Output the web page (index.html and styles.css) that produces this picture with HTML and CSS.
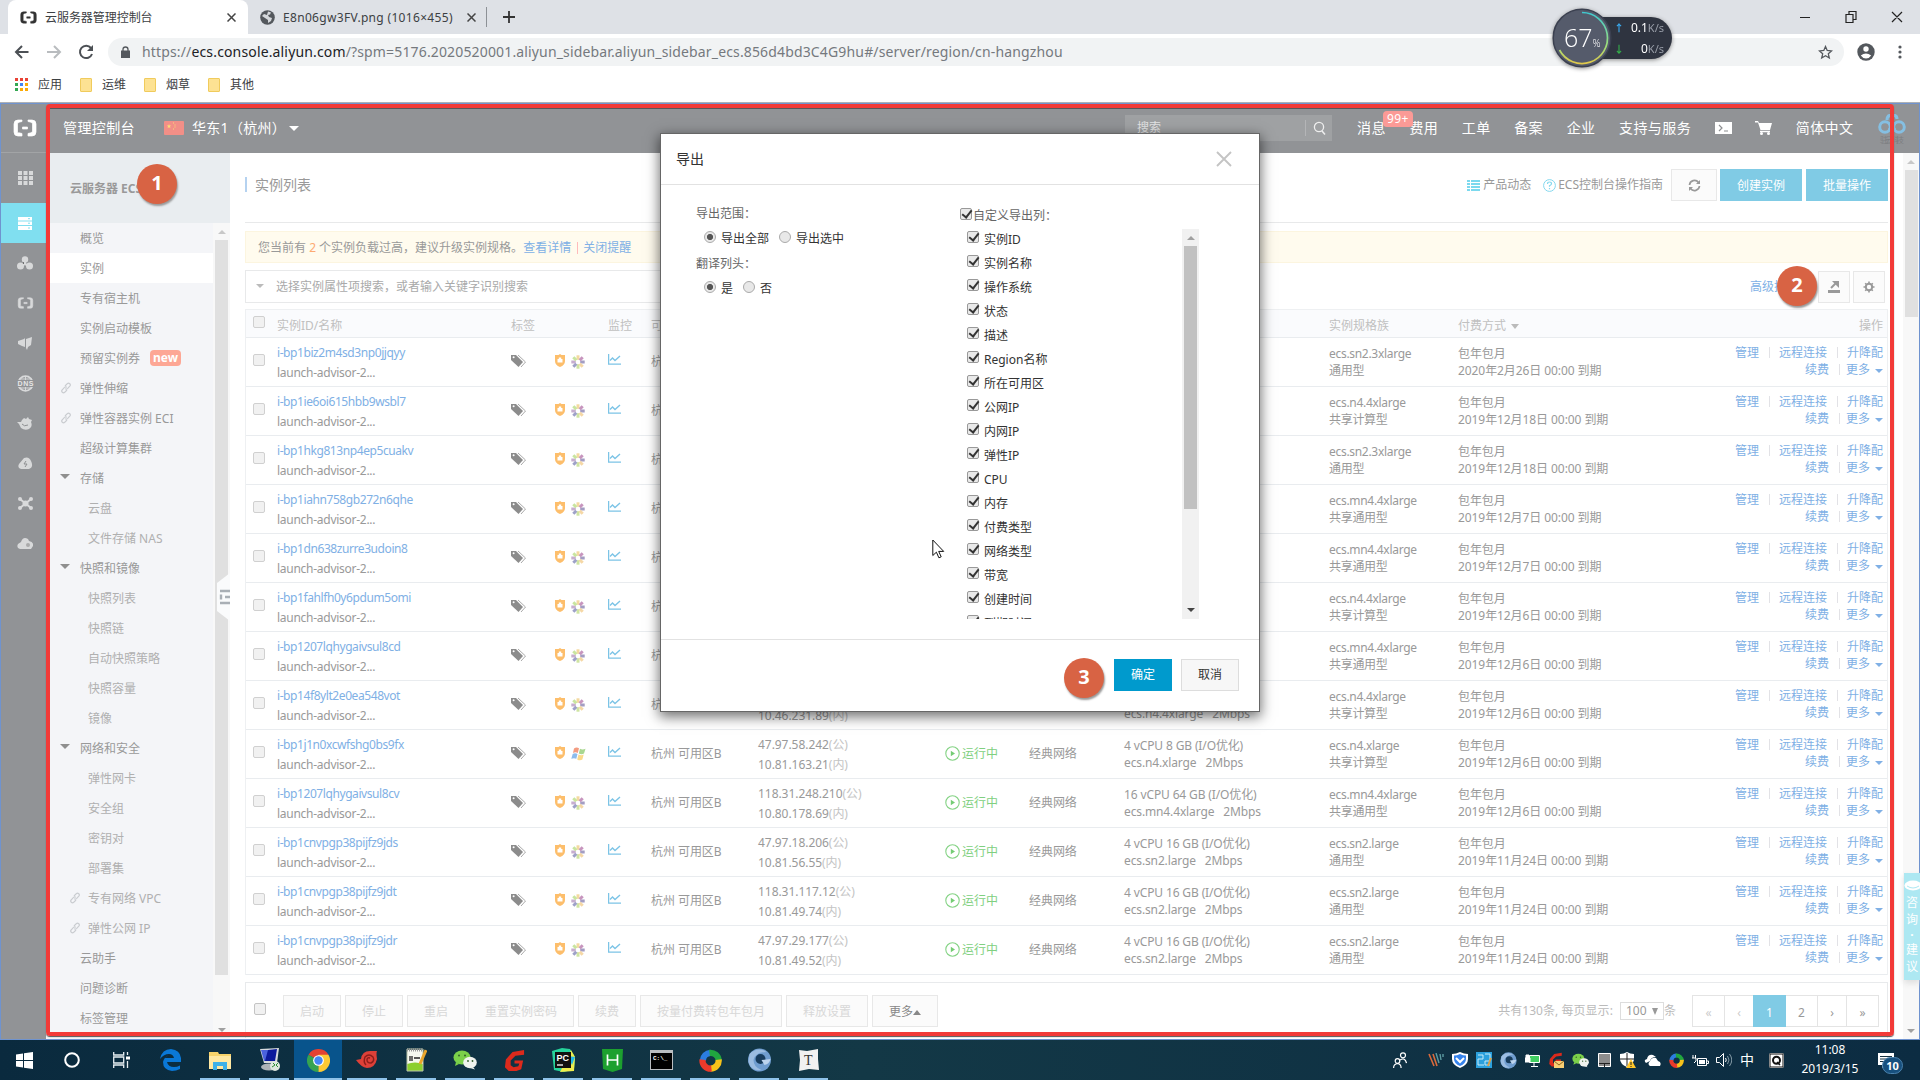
FILE: index.html
```html
<!DOCTYPE html>
<html lang="zh-CN">
<head>
<meta charset="utf-8">
<title>云服务器管理控制台</title>
<link rel="stylesheet" href="styles.css">
</head>
<body>
<svg class="defs" width="0" height="0">
  <symbol id="brand" viewBox="0 0 24 18"><path d="M9 1H5Q1 1 1 5v8q0 4 4 4h4v-2.500l-3-.7Q4.500 14.500 4.500 13V5q0-1.500 1.500-1.800L9 2.500zM15 1h4q4 0 4 4v8q0 4-4 4h-4v-2.500l3-.7q1.500-.3 1.500-1.800V5q0-1.500-1.500-1.800L15 2.500zM9.500 8h5v2h-5z" fill="currentColor" stroke="currentColor" stroke-width=".7"/></symbol>
  <symbol id="tag" viewBox="0 0 16 14"><path d="M0 1h5l7 7-4.500 5L0 6z" fill="#8c8c8c"/><circle cx="2.600" cy="3.200" r="1" fill="#fff"/><path d="M7 1l7.500 7L10 13" fill="none" stroke="#aaa" stroke-width="1"/></symbol>
  <symbol id="shield" viewBox="0 0 12 13"><path d="M6 0l1.500 1h3.500v6q0 4-5 6-5-2-5-6V1h3.500z" fill="#fdbe6b"/><path d="M3.500 5h5v3.500h-5z" fill="#fff"/><path d="M4.800 5.500V3.500h2.400v2" fill="#fff"/></symbol>
  <symbol id="sun" viewBox="0 0 14 14"><g fill="none" stroke-width="3"><path d="M7 .3v4.500" stroke="#f4d9a0"/><path d="M7 9.200v4.500" stroke="#cfe4a2"/><path d="M.3 7h4.500" stroke="#c6aecf"/><path d="M9.200 7h4.500" stroke="#a39dc2"/><path d="M2.300 2.300l3 3" stroke="#c9e59f"/><path d="M11.700 2.300l-3 3" stroke="#c795be"/><path d="M2.300 11.700l3-3" stroke="#9ea1c8"/><path d="M11.700 11.700l-3-3" stroke="#f5d8a6"/></g><circle cx="7" cy="7" r="1.500" fill="#fff"/></symbol>
  <symbol id="win" viewBox="0 0 15 14"><path d="M3 1.500q2.500-2 5-.3L6.800 6Q4.500 4.500 2 6z" fill="#f39b80"/><path d="M9 1.800q2.500 1.500 5.500 0L13 6.500Q10.500 8 7.800 6.400z" fill="#a9d791"/><path d="M1.700 7q2.300-1.600 4.800 0l-1.200 4.800Q3 10.500.3 11.800z" fill="#8cbcec"/><path d="M7.500 7.400q2.600 1.500 5.200.2l-1.300 5Q8.800 14 6.200 12.400z" fill="#fad98a"/></symbol>
  <symbol id="chart" viewBox="0 0 13 11"><path d="M.6 0v10.200H13" fill="none" stroke="#7cc4e6" stroke-width="1.300"/><path d="M2 6.500L4.500 4 7 6.500 12 2" fill="none" stroke="#7cc4e6" stroke-width="1.400"/></symbol>
  <symbol id="run" viewBox="0 0 15 15"><circle cx="7.500" cy="7.500" r="6.700" fill="none" stroke="#85d385" stroke-width="1.100"/><path d="M5.800 4.800L10 7.500l-4.200 2.700z" fill="#74cc74"/></symbol>
  <symbol id="link" viewBox="0 0 12 12"><g fill="none" stroke="#c9ccd0" stroke-width="1.200"><path d="M5 4l2.300-2.300q1.200-1 2.400 0 1.200 1.300.1 2.500L7.500 6.600q-1.200 1-2.300 0"/><path d="M7 8l-2.300 2.300q-1.200 1-2.400 0-1.200-1.300-.1-2.500L4.500 5.400q1.200-1 2.300 0"/></g></symbol>
  <symbol id="wechat" viewBox="0 0 24 20"><ellipse cx="9" cy="7.500" rx="8.500" ry="7" fill="#7bd04a"/><path d="M3 12l-1 4 4-2z" fill="#7bd04a"/><ellipse cx="17" cy="12.500" rx="6.800" ry="5.800" fill="#f0f3ee"/><path d="M20 17l2 2.500-5-1.500z" fill="#f0f3ee"/><g fill="#35602a"><circle cx="6" cy="5.500" r="1"/><circle cx="12" cy="5.500" r="1"/><circle cx="15" cy="11" r=".9"/><circle cx="19.500" cy="11" r=".9"/></g></symbol>
  <symbol id="swirl" viewBox="0 0 24 24"><g fill="none" stroke-width="6.500"><path d="M4 12A8.500 8.500 0 0 1 12 4" stroke="#2b7de0"/><path d="M11 4a8.500 8.500 0 0 1 9.500 8" stroke="#20a63f"/><path d="M20.500 11A8.500 8.500 0 0 1 12 20.500" stroke="#f7c21a"/><path d="M13 20.500A8.500 8.500 0 0 1 3.700 11" stroke="#ea3a2b"/></g></symbol>
  <symbol id="orb" viewBox="0 0 24 24"><circle cx="12" cy="12" r="11.500" fill="#6f9dcf"/><path d="M2 6Q10-2 19 4 8 4 6 12q0 7 8 10Q4 24 1 14z" fill="#9cbde1"/><circle cx="13" cy="11" r="5" fill="#173c5c"/><path d="M14 12l9-1q-1 5-6 6z" fill="#bcd4ee"/></symbol>
  <symbol id="gred" viewBox="0 0 24 24"><path d="M22 1v5l-9 1-5 5v5l3 2 5-1 1-3h-5v-3h9l-2 9-5 2H6l-4-4 1-8 7-8z" fill="#dc2a1c"/></symbol>
</svg>

<div class="screen">
  <header class="browser">
    <div class="tabs">
      <div class="tab active"><svg class="tab-ico dark" width="17" height="13"><use href="#brand"/></svg><span class="tab-t">云服务器管理控制台</span><span class="tab-x"><svg width="9" height="9"><path d="M.5.5l8 8m0-8l-8 8" stroke="#444" stroke-width="1.500"/></svg></span></div>
      <div class="tab"><svg class="tab-ico" width="15" height="15" viewBox="0 0 15 15"><circle cx="7.500" cy="7.500" r="7.300" fill="#54585d"/><path d="M8 1.500l3 1-1 2-2 .5 1 2 3 1-1 3-3 2v-3L5 8 2 6l2-2 3 1z" fill="#d5d8dc"/></svg><span class="tab-t">E8n06gw3FV.png (1016×455)</span><span class="tab-x"><svg width="9" height="9"><path d="M.5.5l8 8m0-8l-8 8" stroke="#444" stroke-width="1.500"/></svg></span></div>
      <svg class="plus" width="12" height="12"><path d="M6 0v12M0 6h12" stroke="#333" stroke-width="1.800"/></svg>
      <div class="winctl"><svg width="106" height="14" viewBox="0 0 106 14"><path d="M0 7.500h10M46 4.500h7v8h-7zM49 4V1.500h7v8h-3M92 2l10 10M102 2L92 12" fill="none" stroke="#222" stroke-width="1.200"/></svg></div>
    </div>
    <div class="toolbar">
      <svg width="96" height="28" viewBox="0 0 96 28"><g fill="none" stroke-width="2"><path d="M28.500 14H16m6-6l-6 6 6 6" stroke="#4c5055"/><path d="M47 14h13m-6-6l6 6-6 6" stroke="#b9bcbf"/><path d="M91 10a6.200 6.200 0 1 0 1 6" stroke="#4c5055"/></g><path d="M93 7v6h-6z" fill="#4c5055"/></svg>
      <div class="omni"><svg width="9" height="12"><path d="M0 4.500h9V12H0z" fill="#54585d"/><path d="M2 5V3.500a2.500 2.500 0 0 1 5 0V5" fill="none" stroke="#54585d" stroke-width="1.300"/></svg><span class="url">https://<b>ecs.console.aliyun.com</b>/?spm=5176.2020520001.aliyun_sidebar.aliyun_sidebar_ecs.856d4bd3C4G9hu#/server/region/cn-hangzhou</span><svg class="star" width="15" height="15" viewBox="0 0 15 15"><path d="M7.500 1.500l1.700 4 4.300.4-3.200 2.900 1 4.200-3.800-2.300L3.700 13l1-4.200L1.500 5.900l4.300-.4z" fill="none" stroke="#54585d" stroke-width="1.300"/></svg></div>
      <svg class="person" width="18" height="18" viewBox="0 0 18 18"><circle cx="9" cy="9" r="8.700" fill="#54585d"/><circle cx="9" cy="6" r="2.700" fill="#fff"/><path d="M3.800 12.500q5-4 10.400 0-2 3-5.200 3t-5.200-3z" fill="#fff"/></svg>
      <svg class="dots" width="4" height="14"><g fill="#54585d"><circle cx="2" cy="2" r="1.600"/><circle cx="2" cy="7" r="1.600"/><circle cx="2" cy="12" r="1.600"/></g></svg>
    </div>
    <div class="marks">
      <svg width="14" height="14"><path d="M0 0h3v3H0zM5 0h3v3H5zM10 0h3v3h-3z" fill="#e94235"/><path d="M0 5h3v3H0zM0 10h3v3H0z" fill="#34a853"/><path d="M5 5h3v3H5z" fill="#4285f4"/><path d="M10 5h3v3h-3zM5 10h3v3H5zM10 10h3v3h-3z" fill="#fbaa05"/></svg><span>应用</span>
      <i class="folder"></i><span>运维</span><i class="folder"></i><span>烟草</span><i class="folder"></i><span>其他</span>
    </div>
  </header>

  <div class="page">
    <nav class="rail">
      <div class="r-logo"><svg width="24" height="18"><use href="#brand"/></svg></div>
      <div class="r-grid"><svg width="15" height="14"><path d="M0 0h4v4H0zM5.500 0h4v4h-4zM11 0h4v4h-4zM0 5h4v4H0zM5.500 5h4v4h-4zM11 5h4v4h-4zM0 10h4v4H0zM5.500 10h4v4h-4zM11 10h4v4h-4z" fill="#d8d9da"/></svg></div>
      <div class="r-on"><svg width="14" height="13"><path d="M0 0h14v3.500H0zM0 4.500h14v3.500H0zM0 9h14v4H0z" fill="#fff"/><path d="M10 1.700h2M10 6.200h2M10 11h2" stroke="#80dff0"/></svg></div>
      <div><svg width="16" height="14"><path d="M8 4v4L4 10m4-2l4 2" stroke="#d8d9da" stroke-width="2"/><g fill="#d8d9da"><circle cx="8" cy="3.500" r="3.200"/><circle cx="3.500" cy="10" r="3.500"/><circle cx="12.500" cy="10" r="3.500"/></g></svg></div>
      <div><svg width="17" height="12"><use href="#brand"/></svg></div>
      <div><svg width="15" height="13"><path d="M0 4l6-2 1-1v9L4 9 0 7zM8 2l6-2-1 8-3 2-1 3-1-2z" fill="#d8d9da"/></svg></div>
      <div><svg width="17" height="17" viewBox="0 0 17 17"><circle cx="8.500" cy="8.500" r="7.300" fill="none" stroke="#d8d9da" stroke-width="1.800"/><path d="M8.500 1v15M2 4h13M2 13h13" stroke="#d8d9da"/><path d="M0 5h17v7H0z" fill="#919396"/><text x=".5" y="11" font-size="7" font-weight="bold" font-family="Liberation Sans" fill="#e6e6e6" textLength="16">DNS</text></svg></div>
      <div><svg width="17" height="13"><path d="M5 3l2-2 2 1 2-2 1 2 3 1-1 2q2 5-2 7-4 2-8-1L2 7 0 5h4z" fill="#d8d9da"/><path d="M5 7q2 3 6 1" stroke="#8e9092" fill="none"/></svg></div>
      <div><svg width="15" height="12"><path d="M3 12Q-1 11 1 7l5-6q5-2 7 3 3 6-2 8z" fill="#d8d9da"/><path d="M8 4L6 7h3l-2 3" stroke="#8e9092" fill="none"/></svg></div>
      <div><svg width="15" height="13"><path d="M2 2l11 9M13 2L2 11" stroke="#d8d9da" stroke-width="2"/><g fill="#d8d9da"><circle cx="2" cy="2" r="2"/><circle cx="13" cy="2" r="2"/><circle cx="2" cy="11" r="2"/><circle cx="13" cy="11" r="2"/><circle cx="7.500" cy="6.500" r="3"/></g></svg></div>
      <div><svg width="16" height="12"><path d="M3 12q-4-1-2-5l3-2q2-6 7-3l1 2q5 1 4 5l-2 3z" fill="#d8d9da"/><circle cx="11" cy="8" r="2" fill="#aaa"/></svg></div>
    </nav>

    <div class="console">
      <div class="topbar">
        <span class="home">管理控制台</span>
        <svg class="flag" width="20" height="14"><rect width="20" height="14" rx="1" fill="#f28f87"/><path d="M5 3l.6 1.500h1.600L6 5.500l.4 1.700L5 6.300 3.600 7.200 4 5.500 2.800 4.500h1.600z" fill="#f9de78"/><path d="M9 2h1M10.500 4h1M10.500 6h1M9 8h1" stroke="#f9de78"/></svg>
        <span class="region">华东1（杭州）</span><i class="caret w"></i>
        <div class="search"><span>搜索</span><svg width="21" height="16"><path d="M.5 0v16" stroke="#b4b5b7"/><circle cx="14" cy="7" r="4.600" fill="none" stroke="#eee" stroke-width="1.300"/><path d="M17 11l3 3.500" stroke="#eee" stroke-width="1.500"/></svg></div>
        <div class="menu"><span>消息<em>99+</em></span><span>费用</span><span>工单</span><span>备案</span><span>企业</span><span>支持与服务</span>
        <svg width="17" height="12"><path d="M0 0h17v12H0z" fill="#fff"/><path d="M4 3l3 3-3 3M9 9h4" fill="none" stroke="#8e9092" stroke-width="1.200"/></svg>
        <svg width="17" height="14"><path d="M0 0h3l1 2h13l-2 7H5.500L3 1.500H0z" fill="#fff"/><path d="M5 10.500h10" stroke="#fff" stroke-width="1.500"/><circle cx="6.500" cy="12.500" r="1.500" fill="#fff"/><circle cx="13.500" cy="12.500" r="1.500" fill="#fff"/></svg>
        <span class="lang">简体中文</span></div>
        <svg class="avatar" width="28" height="30" viewBox="0 0 28 30"><g fill="none" stroke="#85bfe2" stroke-width="3"><circle cx="7" cy="13" r="5.300"/><circle cx="21" cy="13" r="5.300"/><path d="M9 6q0-5 5-5t5 4M11 9l6 7m0-7l-6 7"/></g><text x="2" y="29" font-size="8" fill="#7d7f82" textLength="24">驻云科技</text></svg>
      </div>
      <div class="body">
        <aside class="side">
          <div class="side-h">云服务器 ECS</div>
          <div class="side-b"><div class="side-list" id="side"></div><div class="sb side-sb"><i class="up"></i><b></b><i class="dn"></i></div></div>
          <svg class="fold" width="13" height="48"><path d="M13 0L0 10v28l13 10z" fill="#fafbfc"/><path d="M3 18h10M8 24h5M3 30h10M4 21.500v5" stroke="#a9afb5" stroke-width="2.400"/></svg>
        </aside>
        <main class="main">
          <div class="title"><h1>实例列表</h1><div class="tools"><svg width="13" height="11"><path d="M0 1h3M4 1h9M0 4h3M4 4h9M0 7h3M4 7h9M0 10h3M4 10h9" stroke="#7cd9ee" stroke-width="2"/></svg><span class="t1">产品动态</span><svg class="q" width="13" height="13"><circle cx="6.500" cy="6.500" r="5.900" fill="none" stroke="#84d8ee"/><path d="M4.500 5q0-2 2-2t2 1.700q0 1-2 2v1M6.500 9v1.200" fill="none" stroke="#84d8ee" stroke-width="1.200"/></svg><span class="t2">ECS控制台操作指南</span><span class="btn refresh"><svg width="13" height="13" viewBox="0 0 13 13"><path d="M1.500 6a5 5 0 0 1 9-2.500M11.500 7a5 5 0 0 1-9 2.500" fill="none" stroke="#999" stroke-width="1.700"/><path d="M12 1v4H8zM1 12V8h4z" fill="#999"/></svg></span><span class="btn blue">创建实例</span><span class="btn blue">批量操作</span></div></div>
          <div class="alert">您当前有 <b>2</b> 个实例负载过高，建议升级实例规格。<a>查看详情</a><i></i><a>关闭提醒</a></div>
          <div class="filter"><div class="box"><i class="caret g"></i>选择实例属性项搜索，或者输入关键字识别搜索</div><a>高级搜索</a><span class="btn sq"><svg width="12" height="13"><path d="M0 10h12v3H0z" fill="#999"/><path d="M3 8l5-5" stroke="#999" stroke-width="2"/><path d="M4 1h7v7z" fill="#999"/></svg></span><span class="btn sq"><svg width="12" height="12" viewBox="0 0 12 12"><circle cx="6" cy="6" r="3.200" fill="none" stroke="#999" stroke-width="2"/><path d="M6 .5v2m0 7v2M.5 6h2m7 0h2M2.200 2.200l1.300 1.300m5 5l1.300 1.300m0-7.600L8.500 3.500m-5 5L2.200 9.800" stroke="#999" stroke-width="1.600"/></svg></span></div>
          <div class="table">
            <div class="row head"><span><i class="cb"></i></span><span>实例ID/名称</span><span>标签</span><span>监控</span><span>可用区</span><span></span><span></span><span></span><span></span><span>实例规格族</span><span>付费方式 <i class="caret l"></i></span><span class="act">操作</span></div>
            <div id="rows"></div>
          </div>
          <div class="foot"><i class="cb"></i><div class="fb"><span class="btn off">启动</span><span class="btn off">停止</span><span class="btn off">重启</span><span class="btn off w6">重置实例密码</span><span class="btn off">续费</span><span class="btn off w9">按量付费转包年包月</span><span class="btn off w4">释放设置</span><span class="btn more">更多<i class="upc"></i></span></div>
          <div class="total">共有130条, 每页显示: <span class="sel">100<i></i></span>条</div>
          <div class="pager"><span class="p32">«</span><span class="p29">‹</span><span class="on">1</span><span class="p32 d">2</span><span class="p29 d">›</span><span class="p32 d">»</span></div></div>
        </main>
        <div class="sb main-sb"><i class="up"></i><b></b><i class="dn"></i></div>
      </div>
    </div>

    <div class="advice"><svg width="16" height="11"><ellipse cx="9" cy="5.500" rx="8.500" ry="5" fill="#fff"/><path d="M3 6q6 4 12 0" fill="none" stroke="#ade8f2"/></svg><span>咨</span><span>询</span><span class="dot">·</span><span>建</span><span>议</span></div>
    <div class="frame"></div>

    <section class="modal">
      <header><h2>导出</h2><svg width="16" height="16"><path d="M1 1l14 14M15 1L1 15" stroke="#c4c4c4" stroke-width="1.900"/></svg></header>
      <div class="m-body">
        <div class="m-left"><p>导出范围：</p><div class="radios"><i class="rd on"></i>导出全部<i class="rd"></i>导出选中</div><p>翻译列头：</p><div class="radios"><i class="rd on"></i>是<i class="rd"></i>否</div></div>
        <div class="m-right"><div class="all"><i class="ck"></i><span>自定义导出列：</span></div><div class="m-view"><div class="m-list" id="cols"></div><div class="sb m-sb"><i class="up"></i><b></b><i class="dn k"></i></div></div></div>
      </div>
      <footer><span class="btn ok">确定</span><span class="btn cancel">取消</span></footer>
    </section>
  </div>

  <div class="badge b1">1</div><div class="badge b2">2</div><div class="badge b3">3</div>
  <svg class="cursor" width="13" height="20"><path d="M.8 1v15.500l3.600-3.300 2.500 5.600 2.300-1-2.500-5.400h5z" fill="#fff" stroke="#111" stroke-width="1"/></svg>

  <div class="speed"><div class="pill"><div><i>↑</i><span>0.1<small>K/s</small></span></div><div><i class="gr">↓</i><span>0<small>K/s</small></span></div></div>
    <svg width="60" height="60" viewBox="0 0 60 60"><defs><linearGradient id="ring" x1="0" y1="1" x2="0" y2="0"><stop offset="0" stop-color="#e0c84a"/><stop offset=".35" stop-color="#9fe07a"/><stop offset="1" stop-color="#3fc8cf"/></linearGradient></defs><circle cx="30" cy="30" r="28.800" fill="#555b6b" stroke="#3b4050" stroke-width="1.500"/><path d="M30 4.500A25.500 25.500 0 1 1 7.500 42" fill="none" stroke="url(#ring)" stroke-width="1.700"/></svg><div class="pct">67<small>%</small></div></div>

  <footer class="taskbar">
    <div class="apps">
      <span><svg width="17" height="17"><path d="M0 2.500l7-1V8H0zM8 1.300L17 0v8H8zM0 9h7v6.500l-7-1zM8 9h9v8l-9-1.300z" fill="#fff"/></svg></span>
      <span><svg width="18" height="18"><circle cx="9" cy="9" r="6.800" fill="none" stroke="#fff" stroke-width="2"/></svg></span>
      <span class="tv"><svg width="17" height="16"><path d="M.7 0v3h10V0M.7 5h10v6H.7zM.7 16v-3h10v3M14.500 0v3M14.500 9v7" fill="none" stroke="#e8eef2" stroke-width="1.300"/><path d="M13 4.500h4v3h-4z" fill="#fff"/></svg></span>
      <span><svg width="21" height="22" viewBox="0 0 21 22"><path d="M0 10Q2 0 11 0q9 1 10 9v4H7q1 5 7 5 3 0 6-1.500V20q-4 2-8 2-9-1-9-9 1-5 6-7-3 1-4 3h9q-1-4-5-4-5 0-9 5z" fill="#0a78d7"/></svg></span>
      <span class="u"><svg width="22" height="19"><path d="M0 1h9l1 2h12v15H0z" fill="#f7d36b"/><path d="M0 5h22v13H0z" fill="#ffe8a2"/><path d="M4 11h14v8h-4v-4H8v4H4z" fill="#3db0e8"/></svg></span>
      <span class="u"><svg width="23" height="24"><path d="M2 1l19-1-2 15H6z" fill="#d7dade"/><path d="M3 2h8L8 13H6z" fill="#4a62dd"/><path d="M10 2l9-1-2 12H7z" fill="#0c1a9c"/><ellipse cx="11" cy="19" rx="8" ry="3.500" fill="#aeb3b8"/><circle cx="17" cy="18" r="5" fill="#dfe8df"/><path d="M14 19l3-2-2-2m5 0l-2 2 2 2" stroke="#2d8d34" fill="none"/></svg></span>
      <span class="u cur"><svg width="23" height="23" viewBox="0 0 24 24"><path d="M12 12L1.600 6A12 12 0 0 1 22.400 6z" fill="#e34133"/><path d="M12 12L1.600 6A12 12 0 0 0 12 24z" fill="#35a350"/><path d="M12 24A12 12 0 0 0 22.400 6H12v6z" fill="#fcc934"/><circle cx="12" cy="12" r="5.600" fill="#fff"/><circle cx="12" cy="12" r="4.400" fill="#4486f4"/></svg></span>
      <span class="u"><svg width="22" height="20"><path d="M0 10l5-1q1-8 9-8h7q-1 2 0 8-2 9-10 9-6-1-11-8z" fill="#dd4038"/><path d="M14 8q-3-1-3 2t4 3q4-2 2-6-4-4-8 0-2 5 1 8" fill="none" stroke="#8c1d1a" stroke-width="1.400"/></svg></span>
      <span class="u"><svg width="21" height="24"><path d="M1 2h16v21H1z" fill="#f5f7ee"/><path d="M1 16q8-3 16 0v7H1z" fill="#8ccf2e"/><path d="M1 1h16v22H1z" fill="none" stroke="#b9c4a8"/><path d="M1 2h16" stroke="#999" stroke-dasharray="1 1" stroke-width="3"/><path d="M4 8v5m2-5v5m2-3h6" stroke="#222" stroke-width="1.300"/><path d="M20 2l-6 14" stroke="#e9a52c" stroke-width="3"/></svg></span>
      <span class="u"><svg width="24" height="20"><use href="#wechat"/></svg></span>
      <span class="u"><svg width="23" height="23"><use href="#gred"/></svg></span>
      <span class="u"><svg width="25" height="24"><path d="M1 3l10-3 8 1 5 8-1 12-10 3-10-2z" fill="#26d39b"/><path d="M9 24l14-1 1-14-4-7z" fill="#f0ee4c"/><path d="M17 8l7 1-3 8z" fill="#20b9e9"/><path d="M4 4h16v16H4z" fill="#111"/><text x="5.500" y="12.500" font-size="9" font-weight="bold" font-family="Liberation Sans" fill="#fff">PC</text><path d="M6 17h6" stroke="#fff" stroke-width="1.300"/></svg></span>
      <span class="u"><svg width="21" height="23"><path d="M0 0h21l-1 20-9.500 3L1 20z" fill="#1da02f"/><path d="M5.500 5.500v11m10-11v11m-10-5.500h10" stroke="#fff" stroke-width="1.700"/></svg></span>
      <span class="u"><svg width="23" height="20"><path d="M0 0h23v20H0z" fill="#b9bdc0"/><path d="M1 3h21v16H1z" fill="#000"/><text x="3" y="9.500" font-size="6" font-weight="bold" font-family="Liberation Mono" fill="#fff">C:\_</text></svg></span>
      <span class="u"><svg width="23" height="23"><use href="#swirl"/></svg></span>
      <span class="u"><svg width="25" height="24"><use href="#orb"/></svg></span>
      <span class="u"><svg width="21" height="22"><path d="M1 1l8 1 11-2v10l1 11-10-1-10 2 1-11z" fill="#f1f1f1"/><text x="6" y="16" font-size="14" font-family="Liberation Serif" fill="#333">T</text></svg></span>
    </div>
    <div class="tray">
      <span class="people"><svg width="14" height="17"><g fill="none" stroke="#fff" stroke-width="1.200"><circle cx="4.500" cy="9" r="2.300"/><path d="M.6 16q0-4 4-4.500 3.500.5 3.500 4.500"/><circle cx="10" cy="3.300" r="2.500"/><path d="M7 8q5-3 6.500 3"/></g></svg></span>
      <span><svg width="16" height="14"><path d="M1 1l5 12M5 1l4 12" stroke="#d96a3c" stroke-width="1.600"/><path d="M8 0l3 10M12 1l1 6M15 1v3" stroke="#5b9aa0" stroke-width="1.400"/></svg></span>
      <span><svg width="16" height="16"><path d="M8 0q4 2 8 2v5q0 6-8 9-8-3-8-9V2q4 0 8-2z" fill="#fff"/><path d="M8 2q3 1.500 6 1.500V7q0 4.500-6 7-6-2.500-6-7V3.500Q5 3.500 8 2z" fill="#3684ed"/><path d="M4 6l4 4 4-4" stroke="#fff" stroke-width="2" fill="none"/></svg></span>
      <span><svg width="16" height="16"><path d="M0 0h16v16H0z" fill="#2ba0dd"/><path d="M2 3h5v4H2v6h6M9 2h5v7H9v4h5" stroke="#c7ebf8" fill="none"/><path d="M12 14l3-8" stroke="#dba047" stroke-width="2"/></svg></span>
      <span><svg width="17" height="17"><use href="#orb"/></svg></span>
      <span><svg width="15" height="13"><path d="M4.500 1.500h10v7h-10z" fill="#42cf62" stroke="#fff"/><path d="M9 9v3M6 12.500h7" stroke="#fff"/><path d="M0 4h5v4H0zM1 4V1h3v3" fill="#fff" stroke="#fff"/></svg></span>
      <span><svg width="16" height="17"><use href="#gred" width="15" height="15"/><path d="M6 9h10v7H6z" fill="#f7ce73"/><path d="M6 9l5 4 5-4" fill="none" stroke="#8b6320"/></svg></span>
      <span><svg width="17" height="15"><use href="#wechat"/></svg></span>
      <span><svg width="13" height="14"><path d="M.5.500h12v13H.5z" fill="#8d8d8d" stroke="#fff"/><path d="M1 10.500h11M6.500 10v4" stroke="#222"/></svg></span>
      <span><svg width="16" height="16"><path d="M7 0q3 2 7 2v5q0 5-7 8-7-3-7-8V2q4 0 7-2z" fill="#fff"/><path d="M7 1v13M0 7h14" stroke="#222"/><path d="M11 7l5 9H6z" fill="#ffc629"/><path d="M11 10v3m0 1v1" stroke="#222"/></svg></span>
      <span><svg width="17" height="12"><path d="M2 9Q-1 6 3 5q1-5 6-4l3 2q-5 0-6 4z" fill="#fff"/><path d="M6 12q-3-2 0-5 2-4 6-3l2 3q4 1 2 5z" fill="#fff"/></svg></span>
      <span><svg width="15" height="15"><use href="#swirl"/></svg></span>
      <span><svg width="17" height="11"><path d="M5.500 3.500h9v7h-9zM15 6h1.500v2.500H15M0 3h4v3L2 8M1 3V0m2.500 3V0" fill="none" stroke="#fff"/><path d="M7 5h6v4H7z" fill="#fff"/></svg></span>
      <span><svg width="16" height="14"><path d="M.5 4.500h3l4-4v13l-4-4h-3z" fill="none" stroke="#fff"/><path d="M9.500 5q1.500 2 0 4" fill="none" stroke="#fff"/><path d="M11.500 3q3 4 0 8M13.500 1q4.500 6 0 12" fill="none" stroke="#8399a5"/></svg></span>
      <span class="cn">中</span>
      <span class="ime"><svg width="15" height="15"><rect width="15" height="15" rx="2" fill="#fff"/><rect x="1" y="1" width="13" height="13" fill="none" stroke="#111"/><circle cx="7.500" cy="7.200" r="3.500" fill="none" stroke="#111" stroke-width="2"/><path d="M8 9l3 3" stroke="#111" stroke-width="1.500"/></svg></span>
      <span class="clock">11:08<br>2019/3/15</span>
      <span class="note"><svg width="16" height="15"><path d="M0 0h16v12H7l-3 3v-3H0z" fill="#fff"/><path d="M2 3.500h12M2 6h12M2 8.500h8" stroke="#173140"/></svg><b>10</b></span>
    </div>
  </footer>
</div>
<script src="app.js"></script>
</body>
</html>
```
FILE: styles.css
```css
* { box-sizing: border-box; }
body { margin: 0; font: 12px/20px "Noto Sans", "Noto Sans CJK SC", sans-serif; color: #999; overflow: hidden; }
i, em { font-style: normal; }
svg { display: block; flex: none; }
.defs { position: absolute; }
.screen { position: relative; width: 1920px; height: 1080px; display: flex; flex-direction: column; overflow: hidden; white-space: nowrap; }

.browser { height: 103px; background: #fff; color: #3c4043; border-bottom: 1px solid #aeb1b5; }
.tabs { height: 34px; display: flex; align-items: center; background: #dee1e6; padding-left: 8px; }
.tab { height: 34px; display: flex; align-items: center; width: 240px; padding: 0 12px; }
.tab.active { background: #fff; border-radius: 8px 8px 0 0; }
.tab:not(.active) { border-right: 1px solid #8d9196; height: 20px; width: 239px; padding-right: 10px; }
.tab-t { margin: 1px 0 0 8px; flex: 1; letter-spacing: -.05px; }
.tab:not(.active) .tab-t { letter-spacing: .32px; }
.dark { color: #333; }
.plus { margin-left: 16px; }
.winctl { margin-left: auto; padding-right: 8px; width: 120px; }
.toolbar { height: 35px; display: flex; align-items: center; padding-top: 1px; }
.omni { margin-left: 12px; width: 1736px; height: 28px; border-radius: 14px; background: #f1f3f4; display: flex; align-items: center; padding: 0 11px 0 13px; }
.url { margin: -1px 0 0 12px; font-size: 14px; color: #75797e; flex: 1; letter-spacing: .15px; }
.url b { font-weight: normal; color: #202124; }
.person { margin-left: 13px; }
.dots { margin-left: 23px; }
.marks { height: 32px; display: flex; align-items: center; padding-left: 15px; }
.marks span { margin-left: 9px; width: 24px; }
.folder { width: 12px; height: 14px; background: #fde293; border: 1px solid #f0cb5c; border-radius: 1px; margin-left: 18px; }
.folder + span { margin-left: 10px; }

.page { position: relative; height: 937px; display: flex; border: 1px solid #6f93cf; background: #fff; }
.rail { width: 45px; background: #919396; color: #d8d9da; flex: none; }
.rail div { height: 40px; display: flex; align-items: center; justify-content: center; padding-left: 3px; }
.rail .r-logo { height: 49px; border-bottom: 1px solid #a2a4a6; color: #fff; }
.rail .r-grid { height: 50px; }
.rail .r-on { background: #80dff0; }
.console { flex: 1; display: flex; flex-direction: column; }
.topbar { height: 49px; background: #919396; color: #fff; font-size: 14px; display: flex; align-items: center; padding: 0 0 1px 17px; }
.home { width: 101px; letter-spacing: .4px; }
.region { margin-left: 8px; letter-spacing: .3px; }
.caret { display: inline-block; border: 4px solid transparent; border-top: 5px solid #999; border-bottom: 0; }
.caret.w { border-width: 5px 5px 0; border-top-color: #fff; margin-left: 3px; }
.caret.g { margin: 0 12px 0 10px; border-top: 4px solid #bbb; vertical-align: 3px; }
.caret.l { border-top-color: #bbb; margin-left: 2px; vertical-align: 1px; }
.search { position: absolute; left: 1124px; top: 11px; width: 207px; height: 26px; background: #9fa1a3; display: flex; align-items: center; justify-content: space-between; padding: 0 6px 0 12px; font-size: 12px; color: #e2e3e4; }
.menu { margin-left: auto; display: flex; align-items: center; width: 521px; gap: 23.600px; letter-spacing: .4px; }
.menu span { position: relative; }
.menu em { position: absolute; left: 26px; top: -7px; background: #fb9a96; border-radius: 4px; padding: 0 4px; font-size: 12px; line-height: 16px; z-index: 1; }
.avatar { margin: 2px 13px 0 0; }
.body { flex: 1; display: flex; min-height: 0; }

.side { position: relative; width: 184px; padding-left: 4px; background: #f4f5f8; display: flex; flex-direction: column; }
.side-h { height: 70px; background: #e9edf0; padding: 26px 0 0 20px; font-weight: bold; color: #999; }
.side-b { flex: 1; display: flex; min-height: 0; overflow: hidden; }
.side-list { width: 163px; }
.side-list div { height: 30px; padding-left: 30px; line-height: 31px; display: flex; align-items: center; color: #999; }
.side-list .on { background: #fff; }
.side-list .sub { padding-left: 38px; color: #b0b0b0; }
.side-list .tri::before { content: ""; border: 5px solid transparent; border-top: 5px solid #8f8f8f; border-bottom: 0; margin: -4px 10px 0 -20px; }
.side-list svg { margin: 0 8px 0 -20px; }
.side-list .sub svg { margin: 0 7px 0 -19px; }
.new { background: #fda795; color: #fff; border-radius: 4px; line-height: 16px; padding: 0 3px; margin-left: 10px; font-weight: bold; }
.fold { position: absolute; right: 0; top: 420px; }
.sb { display: flex; flex-direction: column; align-items: center; background: #f8f8f8; width: 17px; flex: none; }
.sb b { width: 13px; background: #e0e0e0; margin-top: 4px; }
.sb .up, .sb .dn { width: 0; height: 0; border: 4px solid transparent; border-bottom: 4px solid #c8c8c8; border-top: 0; margin-top: 7px; }
.sb .dn { border-top: 4px solid #a0a0a0; border-bottom: 0; margin: auto 0 6px; }
.side-sb b { height: 735px; flex: none; margin-top: 6px; }
.side-sb .dn { margin-bottom: 7px; }
.main-sb { width: 16px; }
.main-sb b { height: 147px; margin-top: 6px; }

.main { flex: 1; padding: 0 15px; }
.title { height: 70px; border-bottom: 1px solid #e8e9ea; display: flex; justify-content: space-between; width: 1643px; }
h1 { margin: 24px 0 0; height: 15px; border-left: 2px solid #b5d2f0; padding-left: 8px; font: 14px/16px "Noto Sans", "Noto Sans CJK SC", sans-serif; }
.tools { display: flex; align-items: center; height: 32px; margin-top: 16px; }
.tools .t1 { margin: 0 12px 0 3px; }
.tools .t2 { margin: 0 8px 0 2px; }
.btn { height: 32px; width: 58px; display: flex; align-items: center; justify-content: center; border: 1px solid #e8e8e8; background: #fbfbfb; flex: none; }
.tools .btn { width: 82px; margin-left: 4px; }
.tools .refresh { width: 46px; margin: 0 -1px 0 0; }
.tools .blue { background: #80cbe5; border: 0; color: #fff; padding-top: 1px; }
.alert { margin-top: 8px; height: 32px; width: 1643px; border: 1px solid #fcf5df; background: #fffbee; padding-left: 12px; line-height: 32px; }
.alert b { font-weight: normal; color: #fdaa72; }
.alert a, .filter a, .act a { color: #80b0e5; }
.alert i { display: inline-block; height: 12px; margin: 0 5px 0 6px; border-left: 1px solid #fbb; vertical-align: -2px; }
.filter { margin-top: 7px; height: 33px; display: flex; width: 1640px; align-items: center; }
.filter .box { width: 1000px; height: 33px; border: 1px solid #e8e9ea; line-height: 31px; color: #aaa; }
.filter a { margin-left: auto; margin-right: 17px; }
.filter .sq { width: 32px; margin-left: 3px; }
.table { margin-top: 6px; width: 1643px; border: 1px solid #eef0f2; border-width: 0 1px; }
.row { height: 49px; display: grid; grid-template-columns: 31px 234px 97px 43px 107px 186px 85px 95px 205px 129px 1fr 160px; border-bottom: 1px solid #e9ecef; }
.head { height: 29px; background: #fafbfd; border-top: 1px solid #eef0f2; color: #c0c0c0; line-height: 31px; }
.cb { display: block; width: 12px; height: 12px; border: 1px solid #d0d0d0; border-radius: 2px; background: #f1f1f1; margin: 16px 0 0 7px; }
.head .cb { margin-top: 6px; }
.idc { letter-spacing: -.27px; padding-top: 5px; }
.lnk { letter-spacing: -.42px; color: #80b0e5; }
.ic { display: flex; padding-top: 16px; }
.ic svg:nth-child(2) { margin-left: 27px; }
.ic svg:nth-child(3) { margin: 1px 0 0 5px; }
.mid { line-height: 48px; letter-spacing: -.05px; }
.ip { padding-top: 5px; letter-spacing: -.05px; }
.ip small { font-size: 12px; color: #c4c4c4; }
.st { display: flex; align-items: center; color: #80d080; gap: 2px; padding: 0 0 1px 1px; }
.two { padding-top: 7px; line-height: 17px; letter-spacing: -.3px; white-space: pre; }
.cfg { letter-spacing: -.13px; }
.pay { letter-spacing: -.08px; }
.act { text-align: right; padding: 6px 4px 0 0; line-height: 17px; }
.head .act { padding: 0 4px 0 0; line-height: 31px; }
.act i.s { display: inline-block; height: 11px; margin: 0 9px 0 10px; border-left: 1px solid #e2e2e6; vertical-align: -1px; }
.act i.s2 { margin-right: 6px; }
.act .caret { border-top-color: #80b0e5; margin-left: 5px; border-top-width: 4px; vertical-align: 1px; }

.foot { margin-top: 7px; width: 1643px; border: 1px solid #e8eaec; border-width: 1px 1px 0; height: 56px; display: flex; padding-top: 12px; }
.foot .cb { margin: 8px 17px 0 8px; border-color: #c4c4c4; }
.fb { display: flex; gap: 4px; margin-right: auto; }
.off { color: #d8d8d8; }
.fb .w6 { width: 106px; margin-left: -1px; } .fb .w9 { width: 142px; } .fb .w4 { width: 82px; } .fb .more { width: 66px; color: #888; }
.fb .btn { padding-top: 2px; }
.upc { border: 4px solid transparent; border-bottom: 5px solid #888; border-top: 0; }
.total { color: #bbb; height: 32px; letter-spacing: .05px; display: flex; align-items: center; }
.sel { display: flex; align-items: center; gap: 5px; border: 1px solid #ddd; height: 18px; padding: 0 5px; width: 44px; margin: 0 0 0 7px; color: #999; letter-spacing: 0; }
.sel i { border: 3px solid transparent; border-top: 7px solid #999; border-bottom: 0; }
.pager { display: flex; margin: 0 8px 0 16px; border: 1px solid #e4e4e4; height: 32px; width: 187px; line-height: 33px; text-align: center; color: #ccc; }
.pager .d { color: #999; }
.pager span { border-right: 1px solid #e4e4e4; }
.pager span:last-child { border: 0; flex: 1; }
.p32 { width: 32px; } .p29 { width: 29px; }
.pager .on { width: 33px; background: #80cbe5; color: #fff; margin: -1px 0 -1px -1px; padding-top: 1px; border: 0; }

.advice { position: absolute; right: -1px; top: 769px; width: 16px; height: 107px; background: #ade8f2; color: #fff; display: flex; flex-direction: column; align-items: center; padding-top: 7px; box-shadow: 0 3px 6px #ddd; line-height: 17px; }
.advice svg { margin-bottom: 3px; }
.advice .dot { line-height: 13px; font-weight: bold; }
.frame { position: absolute; left: 45px; top: 0; width: 1848px; height: 932px; border: 4px solid #f23a38; border-radius: 4px; box-shadow: 0 1px 1px #555, inset 0 1px 0 #55575a; }

.modal { position: absolute; left: 659px; top: 29px; width: 600px; height: 579px; background: #fff; border: 1px solid #666; box-shadow: 0 4px 12px 1px rgba(0,0,0,.55); display: flex; flex-direction: column; color: #333; }
.modal header { height: 51px; border-bottom: 1px solid #e2e2e2; display: flex; align-items: center; justify-content: space-between; padding: 0 27px 0 15px; }
h2 { margin: 0; font: 14px/20px "Noto Sans", "Noto Sans CJK SC", sans-serif; color: #333; }
.m-body { flex: 1; display: flex; padding: 17px 0 0 35px; }
.m-left { width: 264px; }
.m-left p { margin: 0; height: 24px; line-height: 24px; color: #666; }
.radios { height: 26px; display: flex; align-items: center; padding-left: 8px; line-height: 24px; }
.rd { width: 12px; height: 12px; border: 1px solid #aaa; border-radius: 50%; background: #e8e8e8; margin: -4px 5px 0 0; }
.rd:not(:first-child) { margin-left: 10px; }
.rd.on { background: radial-gradient(#555 0 2.700px, #e8e8e8 3.500px); }
.m-right { width: 240px; }
.all { height: 27px; display: flex; line-height: 28px; color: #666; }
.ck { width: 12px; height: 12px; border: 1px solid #999; border-radius: 2px; background: #e9e9e9; position: relative; margin: 6px 1px 0 0; flex: none; }
.ck::after { content: ""; position: absolute; left: 3px; top: -1px; width: 4px; height: 8px; border: solid #333; border-width: 0 2px 2px 0; transform: rotate(38deg); }
.m-view { height: 390px; overflow: hidden; display: flex; }
.m-list { width: 222px; padding-left: 7px; }
.m-list div { height: 24px; display: flex; line-height: 21px; }
.m-list .ck { margin: 2px 5px 0 0; }
.m-sb { background: #f1f1f1; }
.m-sb b { height: 263px; background: #c1c1c1; margin-top: 6px; }
.m-sb .up { border-bottom-color: #a0a0a0; }
.m-sb .k { border-top-color: #444; margin-bottom: 7px; }
.modal footer { height: 72px; border-top: 1px solid #e2e2e2; display: flex; justify-content: flex-end; align-items: flex-start; padding: 19px 20px 0 0; gap: 9px; }
.ok { background: #009acd; border-color: #009acd; color: #fff; }
.cancel { background: #f7f7f7; border-color: #ddd; color: #333; }

.badge { position: absolute; width: 40px; height: 40px; border-radius: 50%; background: #d86344; color: #fff; font: bold 20px/38px "Open Sans", "Noto Sans", sans-serif; text-align: center; box-shadow: 1px 2px 2px #999; }
.b1 { left: 137px; top: 164px; } .b2 { left: 1777px; top: 266px; } .b3 { left: 1064px; top: 658px; }
.cursor { position: absolute; left: 932px; top: 539px; }
.speed { position: absolute; left: 1552px; top: 8px; width: 120px; height: 60px; color: #fff; filter: drop-shadow(0 1px 2px #888); }
.speed svg { position: absolute; left: 0; top: 0; }
.pill { position: absolute; left: 40px; top: 9px; width: 80px; height: 42px; border-radius: 0 21px 21px 0; background: #2f3440; padding: 1px 8px 0 22px; }
.pill div { display: flex; justify-content: space-between; height: 21px; line-height: 20px; }
.pill i { color: #39a9ee; font-size: 10px; font-weight: bold; } .pill .gr { color: #34b24a; }
.pill small { color: #999ea8; font-size: 11px; }
.pct { position: absolute; left: 12px; top: 12px; font: 300 25px/34px "Open Sans", sans-serif; }
.pct small { font-size: 10px; }

.taskbar { height: 40px; background: linear-gradient(90deg, #0a2a3e, #133846 45%, #0c2c42); display: flex; justify-content: space-between; color: #fff; }
.apps { display: flex; }
.apps span { width: 49px; height: 40px; display: flex; align-items: center; justify-content: center; }
.apps span:nth-child(-n+2) { width: 48px; }
.apps .tv { width: 50px; }
.apps .u { border: solid #8fc3ea; border-width: 0 0 2px; padding-top: 2px; width: 40px; margin: 0 4px 0 5px; }
.apps .cur { width: 48px; margin: 0 0 0 1px; background: #08548c; border-color: #8fc3ea; }
.tray { display: flex; align-items: center; }
.tray span { width: 24px; display: flex; justify-content: center; }
.tray .people { width: 48px; }
.tray .cn { font-size: 14px; width: 22px; }
.tray .ime { width: 36px; }
.tray .clock { width: 72px; display: block; text-align: center; line-height: 19px; margin-top: -2px; }
.tray .note { width: 54px; position: relative; justify-content: flex-start; padding-left: 12px; }
.note b { position: absolute; left: 16px; top: 4px; width: 21px; height: 17px; border-radius: 9px; background: #17507e; border: 1px solid #4b82ad; line-height: 15px; text-align: center; font-size: 11px; }
```
FILE: app.js
```javascript
const icon = (id, w, h) => `<svg width="${w}" height="${h}"><use href="#${id}"/></svg>`;

// label, style: "" top level, "s" nested, "t" group, "l" external link, "sl" nested link
const menu = [["概览", ""], ["实例", "on"], ["专有宿主机", ""], ["实例启动模板", ""], ["预留实例券", "new"],
  ["弹性伸缩", "l"], ["弹性容器实例 ECI", "l"], ["超级计算集群", ""], ["存储", "t"], ["云盘", "s"], ["文件存储 NAS", "s"],
  ["快照和镜像", "t"], ["快照列表", "s"], ["快照链", "s"], ["自动快照策略", "s"], ["快照容量", "s"], ["镜像", "s"],
  ["网络和安全", "t"], ["弹性网卡", "s"], ["安全组", "s"], ["密钥对", "s"], ["部署集", "s"], ["专有网络 VPC", "sl"],
  ["弹性公网 IP", "sl"], ["云助手", ""], ["问题诊断", ""], ["标签管理", ""]];
document.getElementById("side").innerHTML = menu.map(([t, k]) =>
  `<div class="${k === "on" ? "on" : k === "t" ? "tri" : k[0] === "s" ? "sub" : ""}">${k.endsWith("l") ? icon("link", 12, 12) : ""}${t}${k === "new" ? '<span class="new">new</span>' : ""}</div>`).join("");

// id, family, kind, expiry, public ip, private ip, size
const rows = [
  ["biz2m4sd3np0jjqyy", "sn2.3xlarge", "通用型", "2020年2月26日"],
  ["ie6oi615hbb9wsbl7", "n4.4xlarge", "共享计算型", "2019年12月18日"],
  ["hkg813np4ep5cuakv", "sn2.3xlarge", "通用型", "2019年12月18日"],
  ["iahn758gb272n6qhe", "mn4.4xlarge", "共享通用型", "2019年12月7日"],
  ["dn638zurre3udoin8", "mn4.4xlarge", "共享通用型", "2019年12月7日"],
  ["fahlfh0y6pdum5omi", "n4.4xlarge", "共享计算型", "2019年12月6日"],
  ["207lqhygaivsul8cd", "mn4.4xlarge", "共享通用型", "2019年12月6日"],
  ["4f8ylt2e0ea548vot", "n4.4xlarge", "共享计算型", "2019年12月6日", "", "10.46.231.89", ""],
  ["j1n0xcwfshg0bs9fx", "n4.xlarge", "共享计算型", "2019年12月6日", "47.97.58.242", "10.81.163.21", "4 vCPU 8 GB"],
  ["207lqhygaivsul8cv", "mn4.4xlarge", "共享通用型", "2019年12月6日", "118.31.248.210", "10.80.178.69", "16 vCPU 64 GB"],
  ["cnvpgp38pijfz9jds", "sn2.large", "通用型", "2019年11月24日", "47.97.18.206", "10.81.56.55", "4 vCPU 16 GB"],
  ["cnvpgp38pijfz9jdt", "sn2.large", "通用型", "2019年11月24日", "118.31.117.12", "10.81.49.74", "4 vCPU 16 GB"],
  ["cnvpgp38pijfz9jdr", "sn2.large", "通用型", "2019年11月24日", "47.97.29.177", "10.81.49.52", "4 vCPU 16 GB"]];
const sep = '<i class="s"></i>';
document.getElementById("rows").innerHTML = rows.map(([id, fam, kind, exp, pub, priv, size], n) => `<div class="row">
  <span><i class="cb"></i></span>
  <span class="idc"><a class="lnk">i-bp1${id}</a><br>launch-advisor-2...</span>
  <span class="ic">${icon("tag", 16, 14)}${icon("shield", 12, 13)}${n === 8 ? icon("win", 15, 14) : icon("sun", 14, 14)}</span>
  <span class="ic">${icon("chart", 13, 11)}</span>
  <span class="mid">杭州 可用区B</span>
  <span class="ip">${priv ? (pub ? `${pub}<small>(公)</small>` : "") + `<br>${priv}<small>(内)</small>` : ""}</span>
  <span class="st">${priv ? icon("run", 15, 15) + (pub ? "运行中" : "") : ""}</span>
  <span class="mid">${pub ? "经典网络" : ""}</span>
  <span class="two cfg">${priv ? (size ? size + " (I/O优化)" : "") + `<br>ecs.${fam}   2Mbps` : ""}</span>
  <span class="two">ecs.${fam}<br>${kind}</span>
  <span class="two pay">包年包月<br>${exp} 00:00 到期</span>
  <span class="act"><a>管理</a>${sep}<a>远程连接</a>${sep}<a>升降配</a><br><a>续费</a><i class="s s2"></i><a>更多</a><i class="caret"></i></span>
</div>`).join("");

document.getElementById("cols").innerHTML = ["实例ID", "实例名称", "操作系统", "状态", "描述", "Region名称", "所在可用区", "公网IP",
  "内网IP", "弹性IP", "CPU", "内存", "付费类型", "网络类型", "带宽", "创建时间", "到期时间"]
  .map(t => `<div><i class="ck"></i>${t}</div>`).join("");
```
